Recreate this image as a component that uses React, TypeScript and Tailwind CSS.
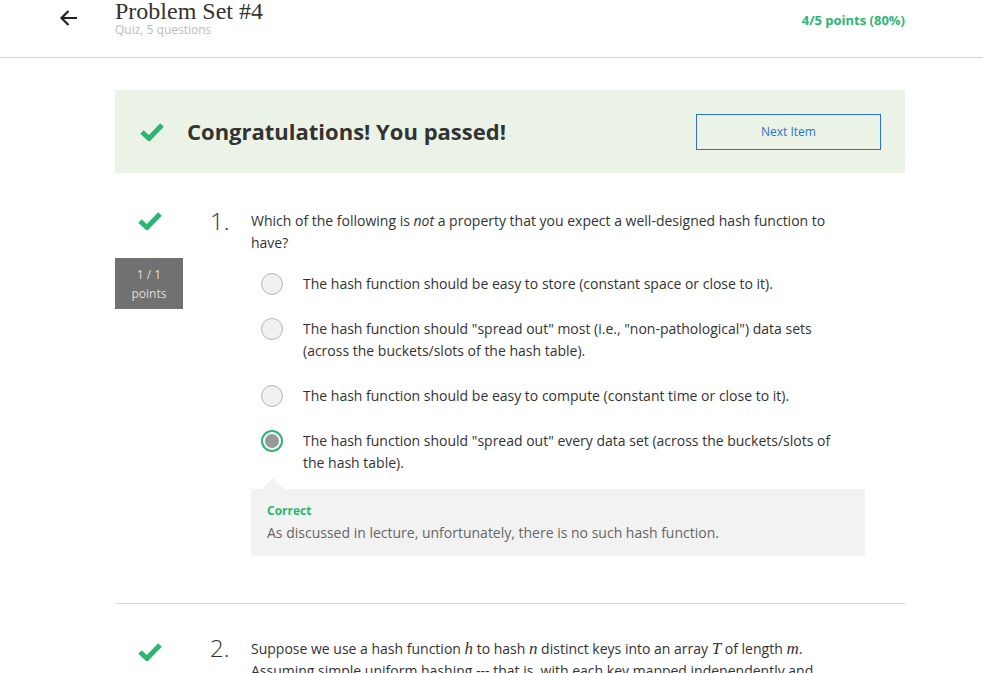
import React from 'react';

const font = "font-['Open_Sans',sans-serif]";

function Check() {
  return (
    <svg width="24" height="19" viewBox="0 0 24 19" className="block">
      <path d="M2 10 L9 16.5 L22 3" fill="none" stroke="#2bb673" strokeWidth="5" strokeLinejoin="miter" strokeLinecap="butt" />
    </svg>
  );
}

function Radio({ selected }: { selected?: boolean }) {
  if (selected) {
    return (
      <div className="flex h-[22px] w-[22px] shrink-0 items-center justify-center rounded-full border-2 border-[#2bb673] bg-white">
        <div className="h-[14px] w-[14px] rounded-full bg-[#999]" />
      </div>
    );
  }
  return <div className="h-[22px] w-[22px] shrink-0 rounded-full border border-[#b5b5b5] bg-[#f1f1f1]" />;
}

const options = [
  { text: 'The hash function should be easy to store (constant space or close to it).' },
  { text: 'The hash function should "spread out" most (i.e., "non-pathological") data sets (across the buckets/slots of the hash table).' },
  { text: 'The hash function should be easy to compute (constant time or close to it).' },
  { text: 'The hash function should "spread out" every data set (across the buckets/slots of the hash table).', selected: true },
];

const mathVar = "font-['Liberation_Serif',serif] text-[17px]";

export default function App() {
  return (
    <div className={`h-[673px] overflow-hidden bg-white ${font} text-[#333]`}>
      <header className="flex h-[58px] items-start border-b border-[#d6d6d6]">
        <div className="ml-[58px] mt-[7px] w-[22px]">
          <svg width="22" height="22" viewBox="0 0 22 22" className="block">
            <path d="M19 11 H4 M10.5 4 L3.5 11 L10.5 18" fill="none" stroke="#222" strokeWidth="2.2" />
          </svg>
        </div>
        <div className="ml-[35px] -mt-[4px]">
          <div className="font-['Liberation_Serif',serif] text-[24px] leading-[30px] text-[#333]">Problem Set #4</div>
          <div className="-mt-[4px] text-[12px] leading-[16px] text-[#bbb]">Quiz, 5 questions</div>
        </div>
        <div className="ml-auto mr-[78px] mt-[10px] text-[13px] font-bold leading-[20px] text-[#2bb673]">4/5 points (80%)</div>
      </header>

      <main className="mx-[115px] mt-[32px] w-[790px]">
        <div className="flex h-[83px] items-center bg-[#ebf3e7]">
          <div className="ml-[25px] w-[47px]">
            <Check />
          </div>
          <div className="text-[22px] font-bold text-[#333]">Congratulations! You passed!</div>
          <button className="ml-auto mr-[24px] h-[36px] w-[185px] border border-[#2a73cc] text-[12px] text-[#2a73cc]">
            Next Item
          </button>
        </div>

        <section className="mt-[36px] flex">
          <div className="flex w-[68px] flex-col items-center">
            <div className="mt-[2px] mb-[28px] ml-[2px]">
              <Check />
            </div>
            <div className="flex h-[51px] w-[68px] flex-col items-center justify-center bg-[#717171] text-[12px] leading-[19px] text-[#dcdcdc]">
              <span>1 / 1</span>
              <span>points</span>
            </div>
          </div>
          <div className="ml-[27px] w-[41px] text-[24px] font-light leading-[24px] text-[#333]">1.</div>
          <div className="w-[614px]">
            <p className="mt-[1px] text-[14px] leading-[22px]">
              Which of the following is <em>not</em> a property that you expect a well-designed hash function to have?
            </p>
            <div className="mt-[19px] flex flex-col gap-[23px]">
              {options.map((o, i) => (
                <div key={i} className="flex items-start">
                  <div className="ml-[10px] w-[42px]">
                    <Radio selected={o.selected} />
                  </div>
                  <p className="w-[540px] text-[14px] leading-[22px]">{o.text}</p>
                </div>
              ))}
            </div>
            <div className="relative mt-[15px] h-[67px] bg-[#f2f2f2] px-[16px] pt-[13px]">
              <div className="absolute -top-[11px] left-[11px] h-0 w-0 border-x-[11px] border-b-[11px] border-x-transparent border-b-[#f2f2f2]" />
              <div className="text-[12px] font-bold leading-[18px] text-[#2bb673]">Correct</div>
              <div className="mt-[3px] text-[14px] leading-[20px] text-[#666]">
                As discussed in lecture, unfortunately, there is no such hash function.
              </div>
            </div>
          </div>
        </section>

        <div className="mt-[47px] border-t border-[#d6d6d6]" />

        <section className="mt-[32px] flex">
          <div className="flex w-[68px] flex-col items-center">
            <div className="mt-[6px] ml-[2px]">
              <Check />
            </div>
          </div>
          <div className="ml-[27px] w-[41px] text-[24px] font-light leading-[24px] text-[#333]">2.</div>
          <div className="w-[600px]">
            <p className="mt-[2px] text-[14px] leading-[22px]">
              Suppose we use a hash function <i className={mathVar}>h</i> to hash <i className={mathVar}>n</i> distinct keys into an
              array <i className={mathVar}>T</i> of length <i className={mathVar}>m</i>. Assuming simple uniform hashing --- that is, with each key mapped independently and
              uniformly to a random bucket --- what is the expected number of keys that get mapped to the first bucket?
            </p>
          </div>
        </section>
      </main>
    </div>
  );
}
